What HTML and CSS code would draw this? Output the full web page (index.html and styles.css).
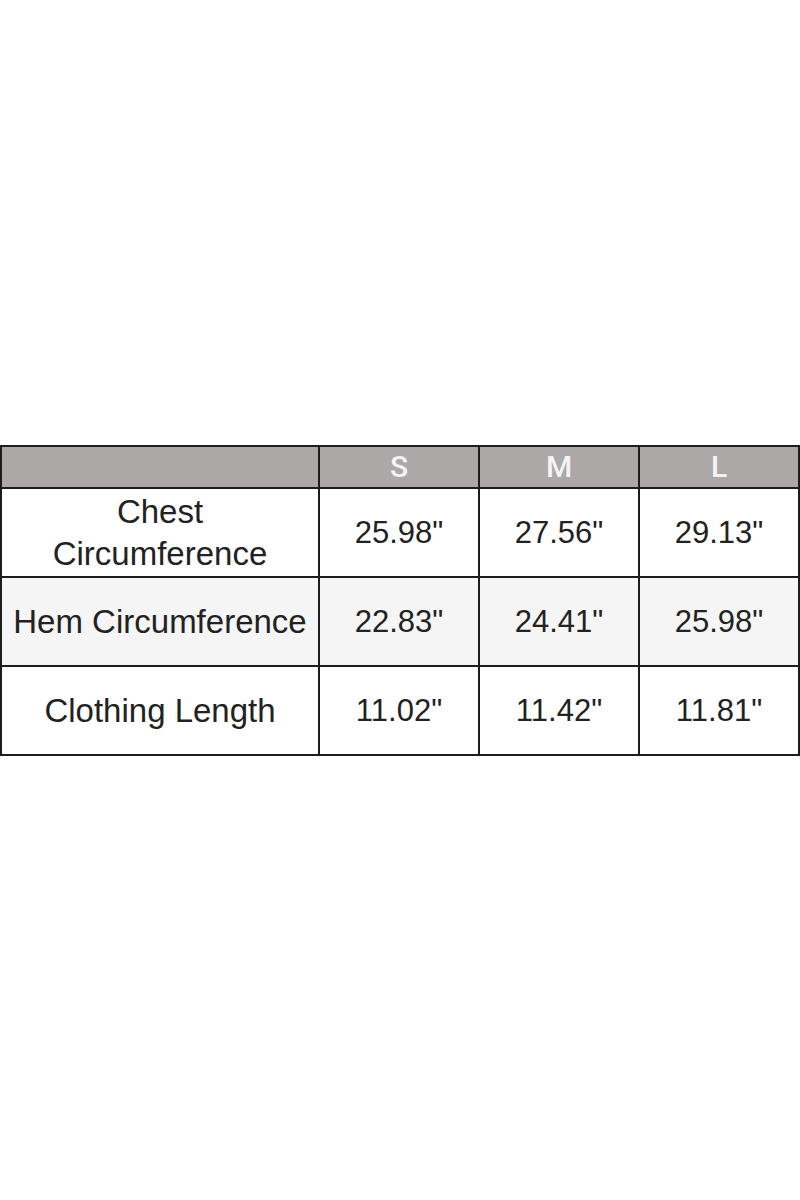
FILE: index.html
```html
<!DOCTYPE html>
<html>
<head>
<meta charset="utf-8">
<link rel="stylesheet" href="styles.css">
</head>
<body>
<div class="page">
  <table class="size-table">
    <colgroup>
      <col class="c-label">
      <col class="c-size">
      <col class="c-size">
      <col class="c-size">
    </colgroup>
    <thead>
      <tr class="head-row">
        <th></th>
        <th>S</th>
        <th>M</th>
        <th>L</th>
      </tr>
    </thead>
    <tbody>
      <tr class="row-a">
        <td class="label">Chest<br>Circumference</td>
        <td>25.98"</td>
        <td>27.56"</td>
        <td>29.13"</td>
      </tr>
      <tr class="row-b">
        <td class="label">Hem Circumference</td>
        <td>22.83"</td>
        <td>24.41"</td>
        <td>25.98"</td>
      </tr>
      <tr class="row-c">
        <td class="label">Clothing Length</td>
        <td>11.02"</td>
        <td>11.42"</td>
        <td>11.81"</td>
      </tr>
    </tbody>
  </table>
</div>
</body>
</html>
```
FILE: styles.css
```css
html, body {
  margin: 0;
  padding: 0;
  background: #ffffff;
}
.page {
  width: 800px;
  height: 1200px;
  display: flex;
  flex-direction: column;
  justify-content: center;
  padding-top: 1px;
  box-sizing: border-box;
}
.size-table {
  width: 800px;
  border-collapse: collapse;
  table-layout: fixed;
  font-family: "Liberation Sans", Arial, sans-serif;
  color: #222222;
}
.c-label { width: 318px; }
.c-size { width: 160px; }
.size-table th,
.size-table td {
  border: 2px solid #1c1c1c;
  text-align: center;
  vertical-align: middle;
  padding: 0 4px;
}
.head-row th {
  background: #aca8a7;
  color: #f4f4f4;
  font-family: Roboto, "Liberation Sans", sans-serif;
  font-size: 30px;
  font-weight: 500;
  height: 40px;
  line-height: 40px;
}
.size-table td {
  font-size: 31px;
  line-height: 42px;
  height: 87px;
}
.size-table td.label {
  font-size: 33px;
}
.row-b td {
  background: #f5f5f5;
}
```
